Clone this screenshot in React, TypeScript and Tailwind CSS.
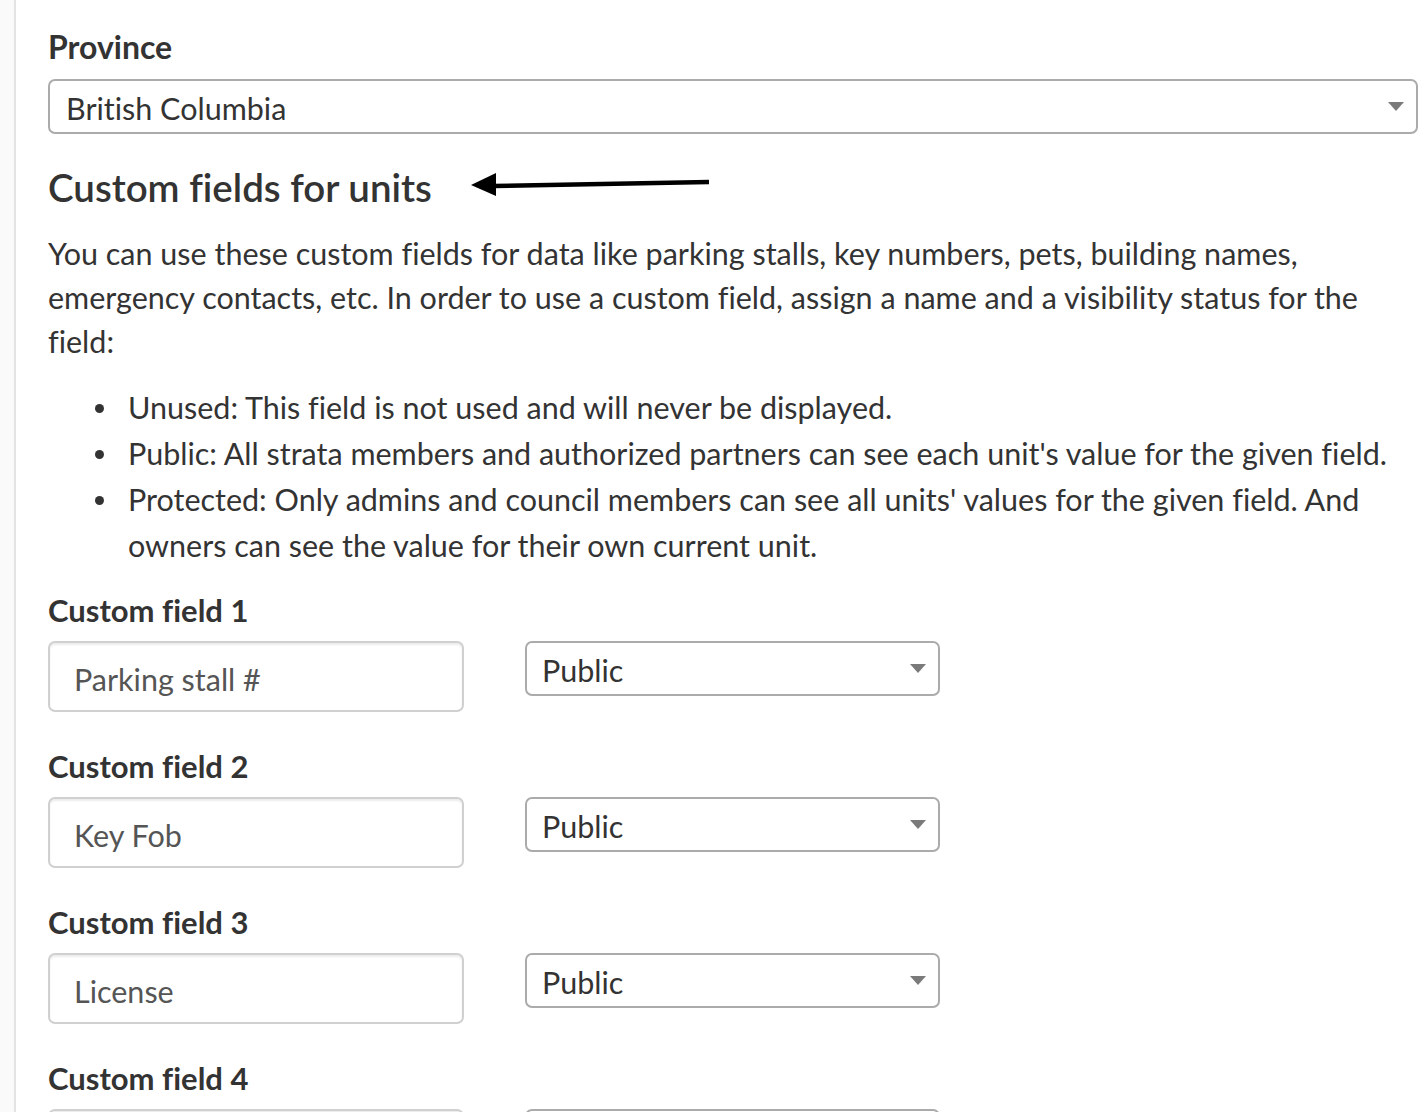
import React from "react";

const Caret = () => (
  <svg width="16" height="10" viewBox="0 0 16 10" className="shrink-0">
    <path d="M0 0 H16 L8 9 Z" fill="#7a7a7a" />
  </svg>
);

const SelectBox = ({ value, className }: { value: string; className: string }) => (
  <div
    className={`flex items-center justify-between border-2 border-[#ababab] rounded-[7px] bg-white text-[#333] ${className}`}
  >
    <span className="pt-[4px]">{value}</span>
    <Caret />
  </div>
);

const fields = [
  { label: "Custom field 1", value: "Parking stall #", visibility: "Public" },
  { label: "Custom field 2", value: "Key Fob", visibility: "Public" },
  { label: "Custom field 3", value: "License", visibility: "Public" },
  // last row is cut off by the bottom of the page
  { label: "Custom field 4", value: "", visibility: "" },
];

const Bullet = ({ children }: { children: React.ReactNode }) => (
  <li className="flex items-start">
    <span className="mt-[20px] ml-[47px] mr-[24px] w-[9px] h-[9px] shrink-0 rounded-full bg-[#333]" />
    <div>{children}</div>
  </li>
);

export default function App() {
  return (
    <div
      className="flex min-h-screen bg-white text-[#333] [font-variant-ligatures:none]"
      style={{ fontFamily: "Lato, 'Liberation Sans', sans-serif" }}
    >
      <div className="w-4 shrink-0 bg-[#fafafa] border-r-2 border-[#e3e3e3]" />

      <div className="flex-1 pl-[32px] pr-[10px] pt-[27px] overflow-hidden h-[1112px]">
        {/* Province */}
        <div className="text-[32px] font-bold leading-[40px]">Province</div>
        <SelectBox
          value="British Columbia"
          className="mt-[12px] h-[55px] pl-[16px] pr-[12px] text-[30.5px]"
        />

        {/* Heading with annotation arrow */}
        <div className="mt-[31px] flex items-center h-[44px]">
          <h2 className="text-[38.5px] font-semibold leading-[44px]">Custom fields for units</h2>
          <svg width="240" height="26" viewBox="0 0 240 26" className="ml-[39px] -mt-[6px]">
            <path d="M22 15 L238 11" stroke="#000" strokeWidth="4.5" />
            <path d="M0 14 L25 2 L25 25 Z" fill="#000" />
          </svg>
        </div>

        {/* Description */}
        <p className="mt-[22px] text-[30.5px] leading-[44px] whitespace-nowrap">
          You can use these custom fields for data like parking stalls, key numbers, pets, building names,
          <br />
          emergency contacts, etc. In order to use a custom field, assign a name and a visibility status for the
          <br />
          field:
        </p>

        <ul className="mt-[21px] text-[30.5px] leading-[46px] whitespace-nowrap">
          <Bullet>Unused: This field is not used and will never be displayed.</Bullet>
          <Bullet>Public: All strata members and authorized partners can see each unit's value for the given field.</Bullet>
          <Bullet>
            Protected: Only admins and council members can see all units' values for the given field. And
            <br />
            owners can see the value for their own current unit.
          </Bullet>
        </ul>

        {/* Custom fields */}
        <div className="mt-[22px] flex flex-col gap-[34px]">
          {fields.map((f) => (
            <div key={f.label}>
              <div className="text-[31px] font-bold leading-[40px]">{f.label}</div>
              <div className="mt-[11px] flex items-start gap-[61px]">
                <div className="w-[416px] h-[71px] flex items-center pl-[24px] pt-[6px] border-2 border-[#d0d0d0] rounded-[7px] shadow-[inset_0_2px_2px_rgba(0,0,0,0.08)] text-[30.5px] text-[#555]">
                  {f.value}
                </div>
                <SelectBox
                  value={f.visibility}
                  className="w-[415px] h-[55px] pl-[15px] pr-[12px] text-[30.5px]"
                />
              </div>
            </div>
          ))}
        </div>
      </div>
    </div>
  );
}
